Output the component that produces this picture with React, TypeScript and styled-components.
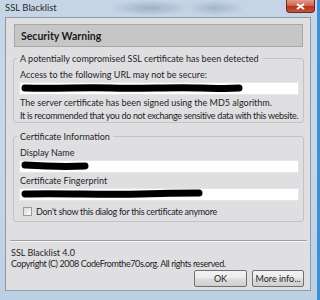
import styled, { createGlobalStyle } from 'styled-components'

const Global = createGlobalStyle`
  html, body {
    margin: 0;
    padding: 0;
    background: #b9cde2;
  }
  * {
    box-sizing: border-box;
  }
`

const FONT = `Lato, "Open Sans", sans-serif`

function Scribble({ width, points }: { width: number; points: string }) {
  return (
    <ScribbleSvg width={width} height={11} viewBox={`0 0 ${width} 11`}>
      <path
        d={points}
        fill="none"
        stroke="#000"
        strokeWidth={7}
        strokeLinecap="round"
        strokeLinejoin="round"
      />
    </ScribbleSvg>
  )
}

export default function App() {
  return (
    <>
      <Global />
      <Window>
        <TitleBar>
          <Title>SSL Blacklist</Title>
          <CloseButton>
            <svg width="9" height="7" viewBox="0 0 9 7">
              <path d="M1 1 L8 6 M8 1 L1 6" stroke="#fff" strokeWidth={2} />
            </svg>
          </CloseButton>
        </TitleBar>
        <Client>
          <Header>Security Warning</Header>

          <Group>
            <Legend>A potentially compromised SSL certificate has been detected</Legend>
            <Text>Access to the following URL may not be secure:</Text>
            <Field>
              <Scribble width={222} points="M4 5 C40 6 60 4 90 5 C120 6 150 4 180 5 C200 6 210 5 218 5" />
            </Field>
            <Text>The server certificate has been signed using the MD5 algorithm.</Text>
            <Text $tight={-0.32}>It is recommended that you do not exchange sensitive data with this website.</Text>
          </Group>

          <Group $second>
            <Legend>Certificate Information</Legend>
            <Text>Display Name</Text>
            <Field>
              <Scribble width={68} points="M4 4 C20 5 40 6 64 5" />
            </Field>
            <Text>Certificate Fingerprint</Text>
            <Field>
              <Scribble width={182} points="M4 5 C40 4 80 6 120 5 C150 4 170 4 178 4" />
            </Field>
            <CheckRow>
              <Check />
              <CheckLabel>Don't show this dialog for this certificate anymore</CheckLabel>
            </CheckRow>
          </Group>

          <Separator />
          <Footer>
            <FootText>SSL Blacklist 4.0</FootText>
            <FootText $tight={-0.4}>Copyright (C) 2008 CodeFromthe70s.org. All rights reserved.</FootText>
            <Buttons>
              <Button $w={53}>OK</Button>
              <Button $w={52}>More info...</Button>
            </Buttons>
          </Footer>
        </Client>
      </Window>
    </>
  )
}

const Window = styled.div`
  width: 320px;
  height: 300px;
  display: flex;
  flex-direction: column;
  padding: 0 6px 9px 5px;
  background:
    radial-gradient(ellipse 40px 8px at 150px 8px, rgba(90, 110, 140, 0.35), transparent),
    radial-gradient(ellipse 30px 8px at 215px 8px, rgba(90, 110, 140, 0.3), transparent),
    linear-gradient(180deg, #c5d5e6 0%, #c9d8e8 40%, #bcd0e4 100%);
  border-right: 3px solid #3f8fd6;
  font-family: ${FONT};
`

const TitleBar = styled.div`
  height: 17px;
  display: flex;
  align-items: flex-start;
  justify-content: space-between;
`

const Title = styled.div`
  font-size: 9.5px;
  color: #2a2a2a;
  padding-top: 2px;
  line-height: 12px;
`

const CloseButton = styled.div`
  width: 29px;
  height: 13px;
  margin-right: -4px;
  border: 1px solid #6b2a22;
  border-top: none;
  border-radius: 0 0 4px 4px;
  background: linear-gradient(180deg, #e29b8c 0%, #d0654f 45%, #b8331c 55%, #c7543b 100%);
  display: flex;
  align-items: center;
  justify-content: center;
`

const Client = styled.div`
  flex: 1;
  background: #dfdfe2;
  border: 1px solid #8e9aa8;
  display: flex;
  flex-direction: column;
  padding: 6px 0 0;
`

const Header = styled.div`
  margin: 0 7px 0 8px;
  height: 23px;
  background: #c6c6c7;
  border: 1px solid #a6a6a8;
  font-size: 10.5px;
  font-weight: 700;
  color: #1a1a1a;
  display: flex;
  align-items: center;
  padding-left: 6px;
`

const Group = styled.fieldset<{ $second?: boolean }>`
  margin: ${(p) => (p.$second ? '8px' : '6px')} 6px 0 7px;
  padding: 4px 4px 0 6px;
  border: 1px solid #c2c3c7;
  border-radius: 3px;
  min-width: 0;
  display: flex;
  flex-direction: column;
`

const Legend = styled.legend`
  font-size: 9px;
  line-height: 11px;
  color: #1e1e1e;
  padding: 0 3px;
  margin-left: -3px;
  font-family: ${FONT};
`

const Text = styled.div<{ $tight?: number }>`
  font-size: 9px;
  line-height: 13px;
  color: #1e1e1e;
  white-space: nowrap;
  letter-spacing: ${(p) => p.$tight ?? 0}px;
`

const Field = styled.div`
  height: 13px;
  margin: 1px 0 1px -1px;
  background: #fff;
  border: 1px solid #e6e6e8;
  display: flex;
  align-items: center;
  padding-left: 1px;
`

const ScribbleSvg = styled.svg`
  display: block;
`

const CheckRow = styled.div`
  display: flex;
  align-items: center;
  gap: 4px;
  height: 18px;
  padding-left: 3px;
  margin-bottom: 1px;
`

const Check = styled.div`
  width: 9px;
  height: 9px;
  border: 1px solid #9a9a9a;
  background: linear-gradient(135deg, #dcdcdc, #fafafa);
`

const CheckLabel = styled.div`
  font-size: 9px;
  color: #1e1e1e;
  white-space: nowrap;
  letter-spacing: -0.3px;
`

const Separator = styled.div`
  margin: 18px 3px 0 4px;
  height: 1px;
  background: #a0a0a3;
  box-shadow: 0 1px 0 #f4f4f4;
`

const Footer = styled.div`
  padding: 6px 6px 0 5px;
  display: flex;
  flex-direction: column;
`

const FootText = styled.div<{ $tight?: number }>`
  font-size: 9px;
  line-height: 11px;
  color: #1e1e1e;
  white-space: nowrap;
  letter-spacing: ${(p) => p.$tight ?? 0}px;
`

const Buttons = styled.div`
  display: flex;
  justify-content: flex-end;
  gap: 5px;
  margin-top: 1px;
`

const Button = styled.div<{ $w: number }>`
  width: ${(p) => p.$w}px;
  height: 17px;
  border: 1px solid #707070;
  border-radius: 2px;
  background: linear-gradient(180deg, #f3f3f3 0%, #ebebeb 48%, #dddddd 52%, #cfcfcf 100%);
  font-size: 9px;
  color: #1e1e1e;
  display: flex;
  align-items: center;
  justify-content: center;
`
